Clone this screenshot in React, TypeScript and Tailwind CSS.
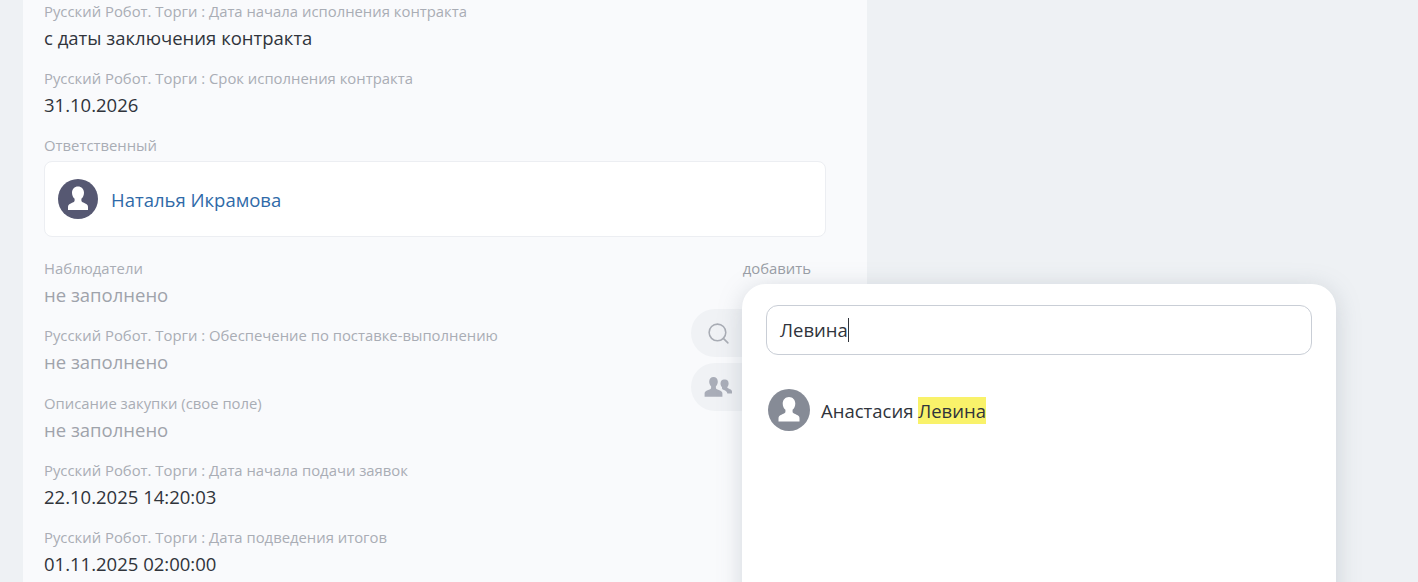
import React from 'react';
import { Search } from 'lucide-react';

const fields1 = [
  { label: 'Русский Робот. Торги : Дата начала исполнения контракта', value: 'с даты заключения контракта' },
  { label: 'Русский Робот. Торги : Срок исполнения контракта', value: '31.10.2026' },
];

const fields2 = [
  { label: 'Русский Робот. Торги : Обеспечение по поставке-выполнению', value: 'не заполнено', empty: true, gap: false },
  { label: 'Описание закупки (свое поле)', value: 'не заполнено', empty: true, gap: true },
  { label: 'Русский Робот. Торги : Дата начала подачи заявок', value: '22.10.2025 14:20:03', gap: false },
  { label: 'Русский Робот. Торги : Дата подведения итогов', value: '01.11.2025 02:00:00', gap: false },
];

function Field({ label, value, empty, gap }: { label: string; value: string; empty?: boolean; gap?: boolean }) {
  return (
    <div className={gap ? 'mb-[15px] pt-px' : 'mb-[15px]'}>
      <div className="h-[24px] text-[14.85px] leading-[22px] text-[#a9adb5]">{label}</div>
      <div className={`h-[28px] text-[18.5px] leading-[28px] ${empty ? 'text-[#9fa3ab]' : 'text-[#30343b]'}`}>{value}</div>
    </div>
  );
}

function Avatar({ size, color }: { size: number; color: string }) {
  return (
    <svg width={size} height={size} viewBox="0 0 40 40" className="shrink-0">
      <circle cx="20" cy="20" r="20" fill={color} />
      <path
        fill="#fff"
        d="M20 7.500c-3.500 0-6 2.700-6 6.300 0 2.600 1.100 4.800 2.600 6v1.700c0 .9-.5 1.400-1.300 1.800-1.700.8-3.400 1.400-4.500 2.400-.6.6-.8 1.300-.8 2.300v3h20v-3c0-1-.2-1.700-.8-2.300-1.100-1-2.800-1.600-4.500-2.400-.8-.4-1.300-.9-1.300-1.800v-1.700c1.500-1.200 2.600-3.400 2.600-6 0-3.600-2.500-6.300-6-6.300z"
      />
    </svg>
  );
}

function GroupIcon() {
  return (
    <svg width="28" height="22" viewBox="0 0 28 22" fill="#a9adb8">
      <path d="M20 3.500c-2 0-3.500 1.700-3.500 3.900 0 1.500.6 2.800 1.500 3.600v1.200c0 .5.300.9.800 1.200 1.600.7 3.200 1.400 4 2.500.3.400.4.900.5 1.500H28v-1.700c0-.7-.1-1.100-.5-1.500-.8-.8-2.200-1.300-3.400-1.900-.6-.3-.9-.7-.9-1.300V11c.9-.8 1.400-2.100 1.400-3.600 0-2.200-1.400-3.900-3.600-3.900z" />
      <path d="M9.500 1C7 1 5.200 3 5.200 5.700c0 1.900.8 3.500 1.900 4.500v1.500c0 .7-.4 1.200-1 1.500-1.600.7-3.500 1.300-4.600 2.300-.7.600-.9 1.300-.9 2.200v3h17.800v-3c0-.9-.2-1.600-.9-2.200-1.100-1-3-1.600-4.600-2.300-.6-.3-1-.8-1-1.500v-1.500c1.100-1 1.900-2.600 1.900-4.500C13.800 3 12 1 9.500 1z" />
    </svg>
  );
}

export default function App() {
  return (
    <div className="relative h-[582px] w-[1418px] overflow-hidden bg-[#eef1f4] font-['Open_Sans','Noto_Sans',sans-serif]">
      <div className="relative ml-[23px] h-full w-[844px] bg-[#f9fafc] px-[21px]">
        {fields1.map(f => (
          <Field key={f.label} {...f} />
        ))}

        <div className="h-[24px] text-[14.85px] leading-[22px] text-[#a9adb5]">Ответственный</div>
        <div className="mt-[3px] mb-[20px] flex h-[76px] w-[782px] items-center gap-[13px] rounded-[8px] border border-[#eceef2] bg-white pl-[13px]">
          <Avatar size={40} color="#565872" />
          <a className="pt-px text-[18.5px] text-[#2f6aa8]">Наталья Икрамова</a>
        </div>

        <div className="flex h-[24px] w-[782px] justify-between pr-[15px] text-[14.85px] leading-[22px] text-[#a9adb5]">
          <span>Наблюдатели</span>
          <span className="text-[#9a9ea6]">добавить</span>
        </div>
        <div className="mb-[15px] h-[28px] text-[18.5px] leading-[28px] text-[#9fa3ab]">не заполнено</div>

        {fields2.map(f => (
          <Field key={f.label} {...f} />
        ))}

        {/* кнопки под попапом */}
        <div className="absolute left-[668px] top-[309px] flex h-[48px] w-[80px] items-center rounded-[24px] bg-[#f0f2f5] pl-[15px]">
          <Search size={25} strokeWidth={1.5} className="text-[#a9adb5]" />
        </div>
        <div className="absolute left-[668px] top-[363px] flex h-[48px] w-[80px] items-center rounded-[24px] bg-[#f0f2f5] pl-[13px]">
          <GroupIcon />
        </div>
      </div>

      <div className="absolute left-[742px] top-[284px] h-[340px] w-[594px] rounded-[24px] bg-white px-[24px] pt-[21px] shadow-[0_4px_24px_rgba(120,130,145,0.28)]">
        <div className="flex h-[50px] w-[546px] items-center rounded-[12px] border border-[#c9ced6] bg-white pl-[13px] text-[18.5px] text-[#30343b]">
          Левина
          <span className="h-[24px] w-px bg-[#30343b]" />
        </div>
        <div className="mt-[34px] ml-[2px] flex items-center gap-[11px]">
          <Avatar size={42} color="#868b96" />
          <div className="pt-px text-[18.5px] leading-[27px] text-[#30343b]">
            Анастасия <span className="inline-block bg-[#f9f26a]">Левина</span>
          </div>
        </div>
      </div>
    </div>
  );
}
